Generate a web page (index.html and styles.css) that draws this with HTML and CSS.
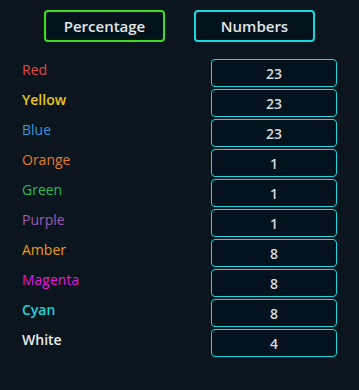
FILE: index.html
```html
<!DOCTYPE html>
<html lang="en">
<head>
    <meta charset="UTF-8">
    <meta name="viewport" content="width=device-width, initial-scale=1.0">
    <title>Colour Counts</title>
    <link rel="stylesheet" href="styles.css">
</head>
<body>

    <!-- Toggle -->
    <div class="toggle">
        <button class="tab tab-green">Percentage</button>
        <button class="tab tab-cyan">Numbers</button>
    </div>

    <!-- Rows -->
    <div class="rows">
        <div class="label c-red">Red</div><div class="count">23</div>
        <div class="label c-yellow bold">Yellow</div><div class="count">23</div>
        <div class="label c-blue">Blue</div><div class="count">23</div>
        <div class="label c-orange">Orange</div><div class="count">1</div>
        <div class="label c-green">Green</div><div class="count">1</div>
        <div class="label c-purple">Purple</div><div class="count">1</div>
        <div class="label c-amber">Amber</div><div class="count">8</div>
        <div class="label c-magenta">Magenta</div><div class="count">8</div>
        <div class="label c-cyan bold">Cyan</div><div class="count">8</div>
        <div class="label c-white bold">White</div><div class="count">4</div>
    </div>

</body>
</html>
```

FILE: styles.css
```css
/* Base */
body {
    margin: 0;
    padding: 10px 22px 0 22px;
    background-color: #0b151e;
    font-family: 'Open Sans', 'Noto Sans', sans-serif;
    color: #e2e6ea;
    height: 380px;
    overflow: hidden;
}

/* Toggle buttons */
.toggle {
    display: flex;
    justify-content: center;
    gap: 29px;
}

.tab {
    width: 121px;
    height: 32px;
    background-color: #04121b;
    color: #e2e6ea;
    font-family: 'Open Sans', 'Noto Sans', sans-serif;
    font-size: 15px;
    font-weight: 600;
    border-radius: 4px;
    padding: 0;
    cursor: pointer;
}

.tab-green {
    border: 2px solid #3ddc1e;
}

.tab-cyan {
    border: 2px solid #17d8e2;
}

/* Colour rows */
.rows {
    display: grid;
    grid-template-columns: 1fr 126px;
    row-gap: 2px;
    margin-top: 17px;
}

.label {
    font-size: 14px;
    line-height: 28px;
    height: 28px;
    margin-top: -3px;
}

.bold {
    font-weight: 600;
}

.count {
    height: 26px;
    border: 1px solid #1ad6e3;
    border-radius: 4px;
    background-color: #03121c;
    text-align: center;
    line-height: 27px;
    font-size: 14px;
    font-weight: 600;
    color: #d6dade;
}

.c-red { color: #e2493d; }
.c-yellow { color: #e8c41a; }
.c-blue { color: #3a95d8; }
.c-orange { color: #e27b2c; }
.c-green { color: #2dba5a; }
.c-purple { color: #9b5bb6; }
.c-amber { color: #ee9a14; }
.c-magenta { color: #e01ad8; }
.c-cyan { color: #1fd4dc; }
.c-white { color: #e8eaec; }
```
